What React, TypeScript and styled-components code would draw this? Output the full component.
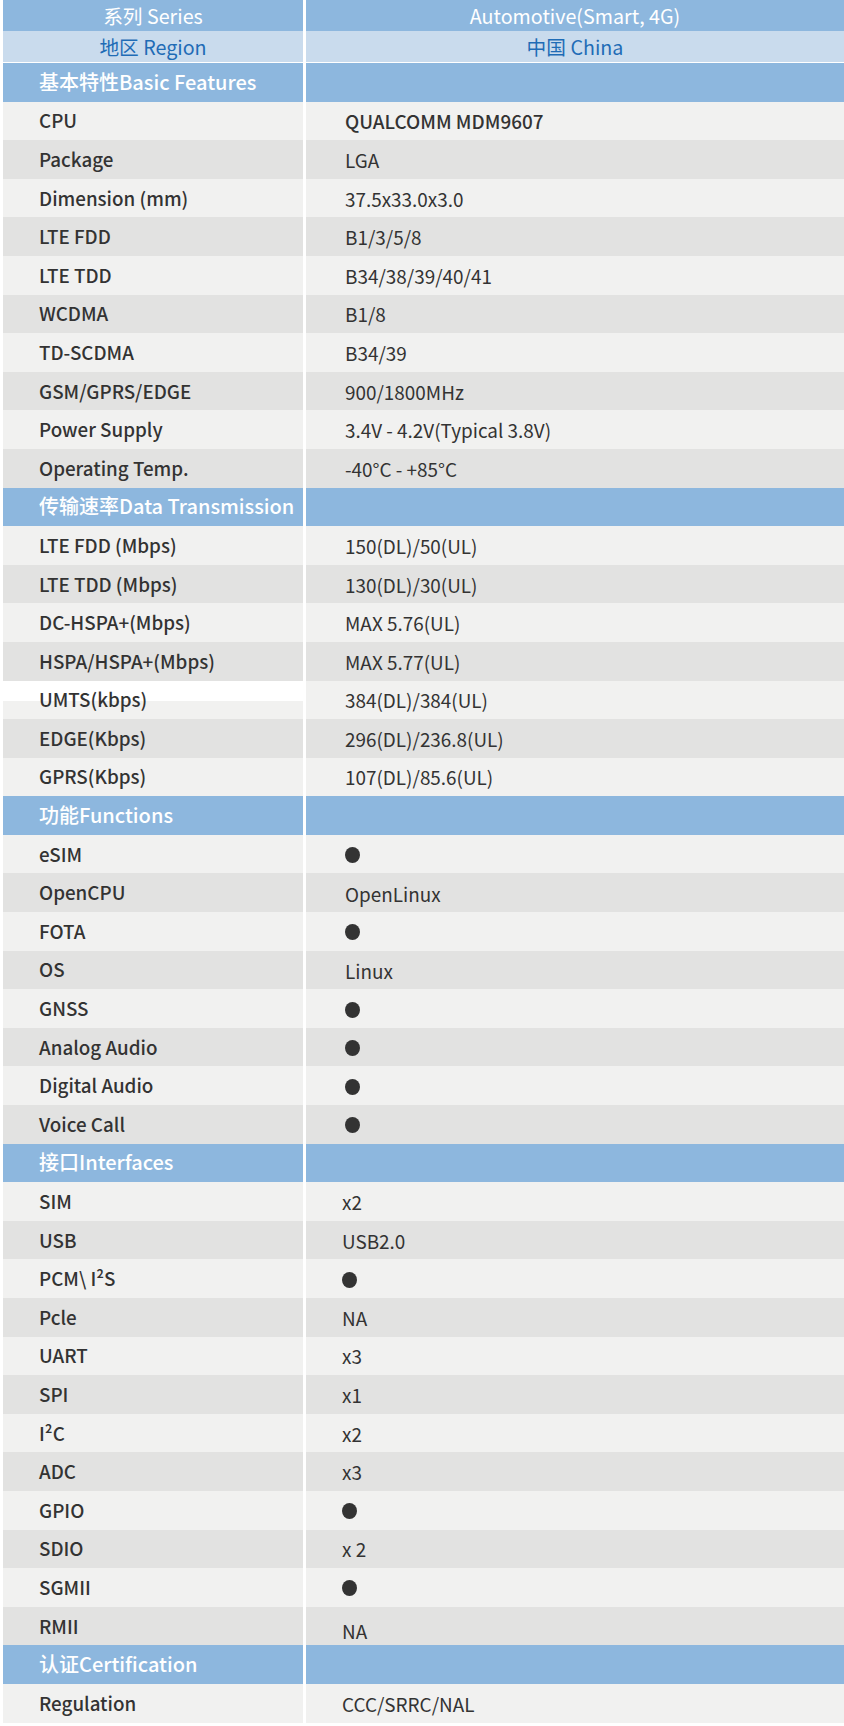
import React from "react";
import styled, { createGlobalStyle } from "styled-components";

const GlobalStyle = createGlobalStyle`
  html, body { margin: 0; padding: 0; background: #ffffff; }
  body { font-family: "Noto Sans CJK SC", "Noto Sans", sans-serif; color: #333333; }
`;

const C = {
  blue: "#8db7de",
  pale: "#c9dbed",
  regionText: "#1f6cb6",
  light: "#f1f1f0",
  dark: "#e2e2e1",
  text: "#333333",
};

const Table = styled.div`
  width: 844px;
  display: flex;
  flex-direction: column;
  padding-left: 3px;
  box-sizing: border-box;
`;

const Top = styled.div`
  display: flex;
  flex-direction: column;
  margin-bottom: 1px;
`;

const Row = styled.div<{ $h: number }>`
  display: grid;
  grid-template-columns: 300px 538px;
  column-gap: 3px;
  height: ${(p) => p.$h}px;
`;

const HeadCell = styled.div<{ $tone: "blue" | "pale" }>`
  display: flex;
  align-items: center;
  justify-content: center;
  background: ${(p) => (p.$tone === "blue" ? C.blue : C.pale)};
  color: ${(p) => (p.$tone === "blue" ? "#ffffff" : C.regionText)};
  font-size: 19.7px;
  font-weight: 400;
  padding-bottom: 1px;
  white-space: nowrap;
`;

const SectionCell = styled.div`
  display: flex;
  align-items: center;
  background: ${C.blue};
  color: #ffffff;
  font-size: 20px;
  font-weight: 500;
  padding-left: 36px;
  padding-bottom: 2px;
  white-space: nowrap;
`;

const LabelCell = styled.div<{ $odd: boolean; $glitch?: boolean }>`
  display: flex;
  align-items: center;
  background: ${(p) =>
    p.$glitch
      ? `linear-gradient(#ffffff 0 20px, ${C.light} 20px)`
      : p.$odd
      ? C.light
      : C.dark};
  color: ${C.text};
  font-size: 18.8px;
  font-weight: 500;
  padding-left: 36px;
  padding-bottom: 2px;
  white-space: nowrap;
`;

const ValueCell = styled.div<{
  $odd: boolean;
  $indent: number;
  $strong?: boolean;
  $shift?: number;
}>`
  display: flex;
  align-items: center;
  background: ${(p) => (p.$odd ? C.light : C.dark)};
  color: ${C.text};
  font-size: 18.9px;
  font-weight: ${(p) => (p.$strong ? 500 : 400)};
  padding-left: ${(p) => p.$indent}px;
  padding-top: ${(p) => (p.$shift ?? 0) * 2}px;
  white-space: nowrap;
`;

const Dot = styled.span`
  display: inline-block;
  width: 15px;
  height: 16px;
  border-radius: 50%;
  background: #333333;
  margin-top: 2px;
`;

type Item = { label: string; value: string; strong?: boolean; glitch?: boolean; shift?: number };
type Section = { title: string; indent: number; rows: Item[] };

const DOT = "●";

const sections: Section[] = [
  {
    title: "基本特性Basic Features",
    indent: 39,
    rows: [
      { label: "CPU", value: "QUALCOMM MDM9607", strong: true },
      { label: "Package", value: "LGA" },
      { label: "Dimension (mm)", value: "37.5x33.0x3.0" },
      { label: "LTE FDD", value: "B1/3/5/8" },
      { label: "LTE TDD", value: "B34/38/39/40/41" },
      { label: "WCDMA", value: "B1/8" },
      { label: "TD-SCDMA", value: "B34/39" },
      { label: "GSM/GPRS/EDGE", value: "900/1800MHz" },
      { label: "Power Supply", value: "3.4V - 4.2V(Typical 3.8V)" },
      { label: "Operating Temp.", value: "-40°C - +85°C" },
    ],
  },
  {
    title: "传输速率Data Transmission",
    indent: 39,
    rows: [
      { label: "LTE FDD (Mbps)", value: "150(DL)/50(UL)" },
      { label: "LTE TDD (Mbps)", value: "130(DL)/30(UL)" },
      { label: "DC-HSPA+(Mbps)", value: "MAX 5.76(UL)" },
      { label: "HSPA/HSPA+(Mbps)", value: "MAX 5.77(UL)" },
      { label: "UMTS(kbps)", value: "384(DL)/384(UL)", glitch: true },
      { label: "EDGE(Kbps)", value: "296(DL)/236.8(UL)" },
      { label: "GPRS(Kbps)", value: "107(DL)/85.6(UL)" },
    ],
  },
  {
    title: "功能Functions",
    indent: 39,
    rows: [
      { label: "eSIM", value: DOT },
      { label: "OpenCPU", value: "OpenLinux", shift: 1 },
      { label: "FOTA", value: DOT },
      { label: "OS", value: "Linux", shift: 1 },
      { label: "GNSS", value: DOT },
      { label: "Analog Audio", value: DOT },
      { label: "Digital Audio", value: DOT },
      { label: "Voice Call", value: DOT },
    ],
  },
  {
    title: "接口Interfaces",
    indent: 36,
    rows: [
      { label: "SIM", value: "x2" },
      { label: "USB", value: "USB2.0" },
      { label: "PCM\\ I²S", value: DOT },
      { label: "Pcle", value: "NA" },
      { label: "UART", value: "x3" },
      { label: "SPI", value: "x1" },
      { label: "I²C", value: "x2" },
      { label: "ADC", value: "x3" },
      { label: "GPIO", value: DOT },
      { label: "SDIO", value: "x 2" },
      { label: "SGMII", value: DOT },
      { label: "RMII", value: "NA", shift: 4 },
    ],
  },
  {
    title: "认证Certification",
    indent: 36,
    rows: [{ label: "Regulation", value: "CCC/SRRC/NAL" }],
  },
];

const ROW_H = 38.6;

export default function App() {
  return (
    <>
      <GlobalStyle />
      <Table>
        <Top>
          <Row $h={31}>
            <HeadCell $tone="blue">系列 Series</HeadCell>
            <HeadCell $tone="blue">Automotive(Smart, 4G)</HeadCell>
          </Row>
          <Row $h={31}>
            <HeadCell $tone="pale">地区 Region</HeadCell>
            <HeadCell $tone="pale">中国 China</HeadCell>
          </Row>
        </Top>
        {sections.map((s) => (
          <React.Fragment key={s.title}>
            <Row $h={ROW_H}>
              <SectionCell>{s.title}</SectionCell>
              <SectionCell />
            </Row>
            {s.rows.map((r, i) => {
              const odd = i % 2 === 0;
              return (
                <Row $h={ROW_H} key={r.label}>
                  <LabelCell $odd={odd} $glitch={r.glitch}>
                    {r.label}
                  </LabelCell>
                  <ValueCell
                    $odd={odd}
                    $indent={s.indent}
                    $strong={r.strong}
                    $shift={r.shift}
                  >
                    {r.value === DOT ? <Dot aria-label="●" /> : r.value}
                  </ValueCell>
                </Row>
              );
            })}
          </React.Fragment>
        ))}
      </Table>
    </>
  );
}
